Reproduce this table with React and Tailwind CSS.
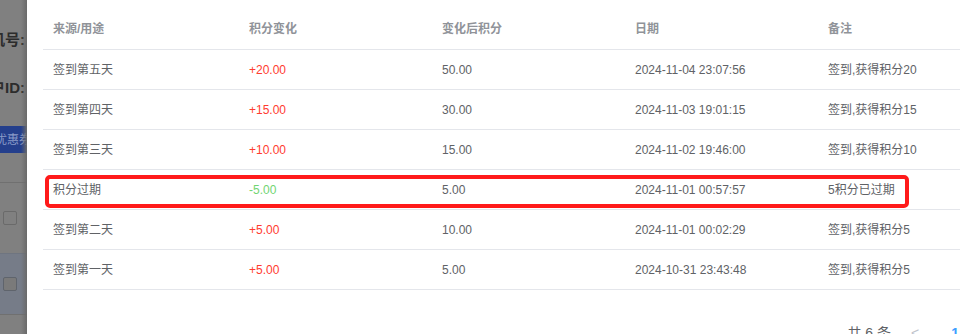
import React from "react";

const rows = [
  ["签到第五天", "+20.00", "50.00", "2024-11-04 23:07:56", "签到,获得积分20", "up"],
  ["签到第四天", "+15.00", "30.00", "2024-11-03 19:01:15", "签到,获得积分15", "up"],
  ["签到第三天", "+10.00", "15.00", "2024-11-02 19:46:00", "签到,获得积分10", "up"],
  ["积分过期", "-5.00", "5.00", "2024-11-01 00:57:57", "5积分已过期", "down"],
  ["签到第二天", "+5.00", "10.00", "2024-11-01 00:02:29", "签到,获得积分5", "up"],
  ["签到第一天", "+5.00", "5.00", "2024-10-31 23:43:48", "签到,获得积分5", "up"],
];

const font = { fontFamily: '"Liberation Sans", "Noto Sans CJK SC", Arial, sans-serif' };

export default function App() {
  return (
    <div className="w-[960px] h-[334px] overflow-hidden flex bg-white relative" style={font}>
      {/* backdrop strip */}
      <div className="w-[27px] shrink-0 h-full bg-[#808080] relative overflow-hidden">
        <div className="flex flex-col">
          <div className="h-[20px]" />
          <div className="h-[40px] flex items-center justify-end pr-[2px] text-[15px] font-bold text-[#2c2c2c] whitespace-nowrap">机号:</div>
          <div className="h-[8px]" />
          <div className="h-[40px] flex items-center justify-end pr-[2px] text-[15px] font-bold text-[#2c2c2c] whitespace-nowrap">户ID:</div>
          <div className="h-[18px]" />
          <div className="h-[27px] bg-[#243f8c] flex items-center text-[12px] text-[#8a9bc8] whitespace-nowrap">
            <span className="ml-[-5px]">优惠券</span>
          </div>
          <div className="h-[29px]" />
          <div className="h-px bg-[#707070]" />
          <div className="h-[70px] flex items-center pl-[3px]">
            <div className="w-[14px] h-[14px] border border-[#6a6a6a] rounded-[2px]" />
          </div>
          <div className="h-px bg-[#6f7580]" />
          <div className="h-[60px] bg-[#767c88] flex items-center pl-[3px]">
            <div className="w-[14px] h-[14px] border border-[#5f646c] bg-[#7a7a7a] rounded-[2px]" />
          </div>
          <div className="h-px bg-[#707070]" />
        </div>
        <div className="absolute top-0 right-0 h-full w-[6px] bg-gradient-to-r from-transparent to-[#6a6a6a]" />
      </div>

      {/* dialog */}
      <div className="flex-1 bg-white pl-[16px]">
        <div className="flex flex-col">
          <div className="h-[50px] flex items-center border-b border-[#e4e6eb] pt-[9px] text-[12px] font-bold text-[#909399]">
            <div className="w-[196px] pl-[10px]">来源/用途</div>
            <div className="w-[193px] pl-[10px]">积分变化</div>
            <div className="w-[193px] pl-[10px]">变化后积分</div>
            <div className="w-[193px] pl-[10px]">日期</div>
            <div className="flex-1 pl-[10px]">备注</div>
          </div>
          {rows.map((r, i) => (
            <div key={i} className="h-[40px] flex items-center border-b border-[#e4e6eb] text-[12px] text-[#606266]">
              <div className="w-[196px] pl-[10px]">{r[0]}</div>
              <div className={"w-[193px] pl-[10px] " + (r[5] === "up" ? "text-[#ff3b30]" : "text-[#72d572]")}>{r[1]}</div>
              <div className="w-[193px] pl-[10px]">{r[2]}</div>
              <div className="w-[193px] pl-[10px]">{r[3]}</div>
              <div className="flex-1 pl-[10px]">{r[4]}</div>
            </div>
          ))}
          <div className="h-[33px]" />
          <div className="flex items-center justify-end text-[14px] text-[#606266] pr-[1px]">
            <span>共 6 条</span>
            <span className="text-[#c0c4cc] text-[14px] ml-[20px]">&lt;</span>
            <span className="text-[#409eff] font-bold ml-[32px]">1</span>
          </div>
        </div>
      </div>

      {/* annotation */}
      <div className="absolute left-[45px] top-[175px] w-[864px] h-[33px] border-[4px] border-[#ff1a1a] rounded-[5px]" />
    </div>
  );
}
